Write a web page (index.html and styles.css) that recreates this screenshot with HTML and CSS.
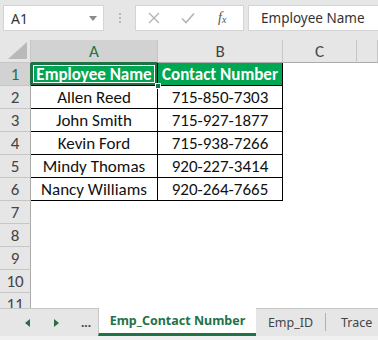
FILE: index.html
```html
<!DOCTYPE html>
<html>
<head>
<meta charset="utf-8">
<link rel="stylesheet" href="styles.css">
</head>
<body>
<div class="app">
  <div class="fbar">
    <div class="namebox"><span>A1</span><svg class="dd" width="8" height="5" viewBox="0 0 8 5"><path d="M0 0h8L4 5z" fill="#8a8a8a"/></svg></div>
    <div class="vdots"><i></i><i></i><i></i></div>
    <div class="fbtns">
      <svg width="14" height="14" viewBox="0 0 14 14"><path d="M2 2L12 12M12 2L2 12" stroke="#b4b4b4" stroke-width="1.4" fill="none"/></svg>
      <svg width="16" height="14" viewBox="0 0 16 14"><path d="M2 7.5L6 11.5L14 2.5" stroke="#b4b4b4" stroke-width="1.6" fill="none"/></svg>
      <span class="fx">f<sub>x</sub></span>
    </div>
    <div class="finput">Employee Name</div>
  </div>
  <div class="sheet">
    <div class="corner"><svg width="19" height="17" viewBox="0 0 19 17"><path d="M19 0V17H0z" fill="#b9b9b9"/></svg></div>
    <div class="ch sel">A</div>
    <div class="ch">B</div>
    <div class="ch">C</div>
    <div class="ch"></div>

    <div class="rh sel">1</div>
    <div class="c hd a1">Employee Name<span class="handle"></span></div>
    <div class="c hd">Contact Number</div>
    <div class="c e"></div><div class="c e"></div>

    <div class="rh">2</div><div class="c t">Allen Reed</div><div class="c t">715-850-7303</div><div class="c e"></div><div class="c e"></div>
    <div class="rh">3</div><div class="c t">John Smith</div><div class="c t">715-927-1877</div><div class="c e"></div><div class="c e"></div>
    <div class="rh">4</div><div class="c t">Kevin Ford</div><div class="c t">715-938-7266</div><div class="c e"></div><div class="c e"></div>
    <div class="rh">5</div><div class="c t">Mindy Thomas</div><div class="c t">920-227-3414</div><div class="c e"></div><div class="c e"></div>
    <div class="rh">6</div><div class="c t">Nancy Williams</div><div class="c t">920-264-7665</div><div class="c e"></div><div class="c e"></div>
    <div class="rh">7</div><div class="c e"></div><div class="c e"></div><div class="c e"></div><div class="c e"></div>
    <div class="rh">8</div><div class="c e"></div><div class="c e"></div><div class="c e"></div><div class="c e"></div>
    <div class="rh">9</div><div class="c e"></div><div class="c e"></div><div class="c e"></div><div class="c e"></div>
    <div class="rh">10</div><div class="c e"></div><div class="c e"></div><div class="c e"></div><div class="c e"></div>
    <div class="rh">11</div><div class="c e"></div><div class="c e"></div><div class="c e"></div><div class="c e"></div>
  </div>
  <div class="tabs">
    <div class="nav">
      <svg width="5" height="8" viewBox="0 0 5 8"><path d="M5 0V8L0 4z" fill="#2f6b4b"/></svg>
      <svg width="5" height="8" viewBox="0 0 5 8"><path d="M0 0V8L5 4z" fill="#2f6b4b"/></svg>
      <span class="more">...</span>
    </div>
    <div class="tab active">Emp_Contact Number</div>
    <div class="tab mid">Emp_ID</div>
    <div class="tab last">Trace</div>
  </div>
</div>
</body>
</html>
```

FILE: styles.css
```css
* { box-sizing: border-box; }
html, body { margin: 0; padding: 0; }
body { width: 378px; height: 340px; overflow: hidden; background: #e6e6e6; font-family: Carlito, "Open Sans", "Noto Sans", sans-serif; }
.app { width: 378px; height: 340px; display: flex; flex-direction: column; overflow: hidden; }

.fbar { height: 40px; flex: none; display: flex; align-items: flex-start; padding-top: 5px; background: #e6e6e6; font-family: "Noto Sans", "Open Sans", sans-serif; }
.namebox { flex: none; margin-left: 3px; width: 101px; height: 26px; background: #fff; border: 1px solid #d4d4d4; display: flex; align-items: center; justify-content: space-between; padding: 0 6px 0 7px; font-size: 14px; color: #333; }
.dd { margin-top: 1px; }
.vdots { flex: none; width: 31px; height: 26px; display: flex; flex-direction: column; align-items: center; justify-content: center; gap: 2px; }
.vdots i { display: block; width: 2px; height: 2px; background: #b8b8b8; }
.fbtns { flex: none; width: 109px; height: 26px; background: #fff; border: 1px solid #d4d4d4; display: flex; align-items: center; padding-left: 11px; }
.fbtns svg:first-child { margin-right: 19px; }
.fbtns svg:nth-child(2) { margin-right: 22px; }
.fx { font-family: "Liberation Serif", serif; font-style: italic; font-size: 14px; color: #555; }
.fx sub { font-size: 10px; vertical-align: -1px; }
.finput { margin-left: 4px; flex: 1; height: 26px; background: #fff; border: 1px solid #d4d4d4; border-right: none; padding-left: 12px; font-size: 13.5px; color: #333; display: flex; align-items: center; white-space: nowrap; }

.sheet { flex: none; height: 268px; overflow: hidden; display: grid; grid-template-columns: 31px 127px 125px 74px 21px; grid-template-rows: repeat(12, 23px); background: #fff; }
.corner { background: #e6e6e6; border-right: 1px solid #c6c6c6; border-bottom: 1px solid #c6c6c6; display: flex; align-items: flex-end; justify-content: flex-end; padding: 0 3px 3px 0; }
.ch { background: #e6e6e6; border-right: 1px solid #c6c6c6; border-bottom: 1px solid #ababab; display: flex; align-items: center; justify-content: center; font-size: 17px; color: #444; }
.ch.sel { background: #d2d2d2; color: #217346; border-bottom: 1px solid #217346; }
.rh { background: #e6e6e6; border-right: 1px solid #ababab; border-bottom: 1px solid #c6c6c6; display: flex; align-items: center; justify-content: center; font-size: 17px; color: #444; }
.rh.sel { background: #d2d2d2; color: #217346; border-right: 1px solid #217346; }

.c { display: flex; align-items: center; justify-content: center; font-size: 17px; color: #111; white-space: nowrap; position: relative; }
.c.t { border-right: 1px solid #000; border-bottom: 1px solid #000; }
.c.hd { background: #00a651; color: #fff; font-weight: bold; border-right: 1px solid #000; border-bottom: 1px solid #000; }
.c.a1 { box-shadow: inset 0 0 0 2px #1e7145, inset 0 0 0 3px #fff; }
.handle { position: absolute; right: -4px; bottom: -4px; width: 6px; height: 6px; background: #1e7145; border: 1px solid #fff; z-index: 2; }

.tabs { flex: 1; display: flex; align-items: stretch; background: #e6e6e6; border-top: 1px solid #c6c6c6; border-bottom: 4px solid #f0f0f0; font-family: "Noto Sans", "Open Sans", sans-serif; font-size: 12.5px; white-space: nowrap; }
.nav { flex: none; width: 98px; display: flex; align-items: center; padding-left: 25px; gap: 24px; }
.more { color: #444; font-weight: bold; font-size: 12px; margin-left: -2px; }
.tab { flex: none; display: flex; align-items: center; color: #444; }
.tab.active { width: 158px; justify-content: center; background: #fff; color: #217346; font-weight: bold; margin-top: -1px; border-left: 1px solid #c6c6c6; border-bottom: 3px solid #217346; }
.tab.mid { width: 70px; justify-content: center; border-right: 1px solid #b0b0b0; margin: 4px 0 5px; }
.tab.last { padding-left: 15px; }
```
